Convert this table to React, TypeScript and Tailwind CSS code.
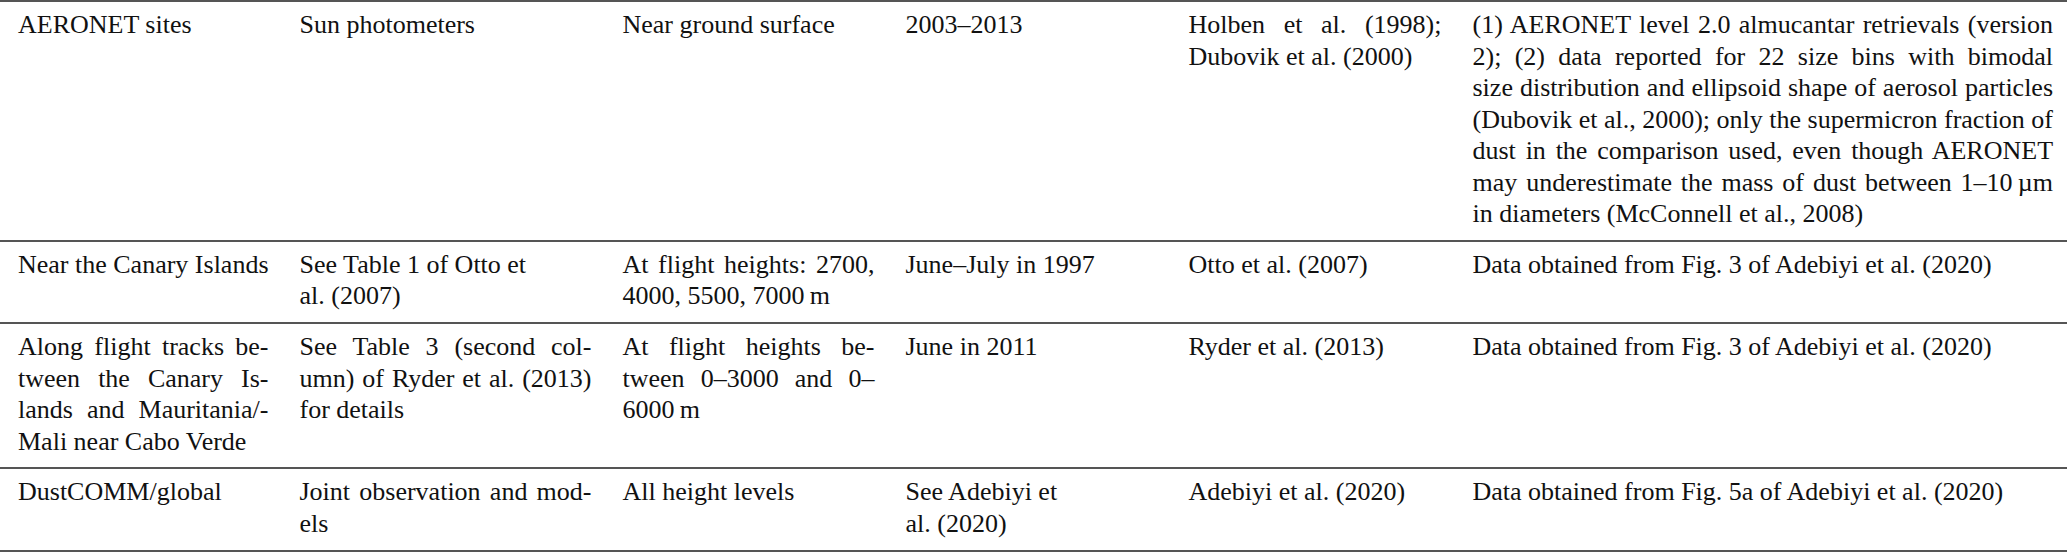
type Cell = { lines: string[]; justify?: number };

const rows: Cell[][] = [
  [
    { lines: ["AERONET sites"] },
    { lines: ["Sun photometers"] },
    { lines: ["Near ground surface"] },
    { lines: ["2003–2013"] },
    { lines: ["Holben et al. (1998);", "Dubovik et al. (2000)"], justify: 1 },
    {
      lines: [
        "(1) AERONET level 2.0 almucantar retrievals (version",
        "2); (2) data reported for 22 size bins with bimodal",
        "size distribution and ellipsoid shape of aerosol particles",
        "(Dubovik et al., 2000); only the supermicron fraction of",
        "dust in the comparison used, even though AERONET",
        "may underestimate the mass of dust between 1–10\u2009µm",
        "in diameters (McConnell et al., 2008)",
      ],
      justify: 6,
    },
  ],
  [
    { lines: ["Near the Canary Islands"] },
    { lines: ["See Table 1 of Otto et", "al. (2007)"] },
    { lines: ["At flight heights: 2700,", "4000, 5500, 7000\u2009m"], justify: 1 },
    { lines: ["June–July in 1997"] },
    { lines: ["Otto et al. (2007)"] },
    { lines: ["Data obtained from Fig. 3 of Adebiyi et al. (2020)"] },
  ],
  [
    {
      lines: ["Along flight tracks be-", "tween the Canary Is-", "lands and Mauritania/-", "Mali near Cabo Verde"],
      justify: 3,
    },
    { lines: ["See Table 3 (second col-", "umn) of Ryder et al. (2013)", "for details"], justify: 2 },
    { lines: ["At flight heights be-", "tween 0–3000 and 0–", "6000\u2009m"], justify: 2 },
    { lines: ["June in 2011"] },
    { lines: ["Ryder et al. (2013)"] },
    { lines: ["Data obtained from Fig. 3 of Adebiyi et al. (2020)"] },
  ],
  [
    { lines: ["DustCOMM/global"] },
    { lines: ["Joint observation and mod-", "els"], justify: 1 },
    { lines: ["All height levels"] },
    { lines: ["See Adebiyi et", "al. (2020)"] },
    { lines: ["Adebiyi et al. (2020)"] },
    { lines: ["Data obtained from Fig. 5a of Adebiyi et al. (2020)"] },
  ],
];

const App = () => {
  return (
    <div
      className="w-[2067px] bg-white text-[#111] text-[26px] leading-[31.5px]"
      style={{ fontFamily: '"Liberation Serif", "Times New Roman", serif' }}
    >
      <div className="border-b-2 border-[#555]">
        {rows.map((row, r) => (
          <div
            key={r}
            className="grid grid-cols-[284px_323px_283px_283px_284px_1fr] border-t-2 border-[#555]"
          >
            {row.map((cell, c) => (
              <div
                key={c}
                className={`pt-[7px] pb-[10.3px] ${c === 0 ? "pl-[18px] pr-[15.5px]" : c === 5 ? "pl-[15.5px] pr-[18px]" : "px-[15.5px]"}`}
              >
                {cell.lines.map((line, i) => (
                  <div
                    key={i}
                    className={
                      i < (cell.justify ?? 0)
                        ? "whitespace-nowrap text-justify [text-align-last:justify]"
                        : "whitespace-nowrap"
                    }
                  >
                    {line}
                  </div>
                ))}
              </div>
            ))}
          </div>
        ))}
      </div>
    </div>
  );
};

export default App;
